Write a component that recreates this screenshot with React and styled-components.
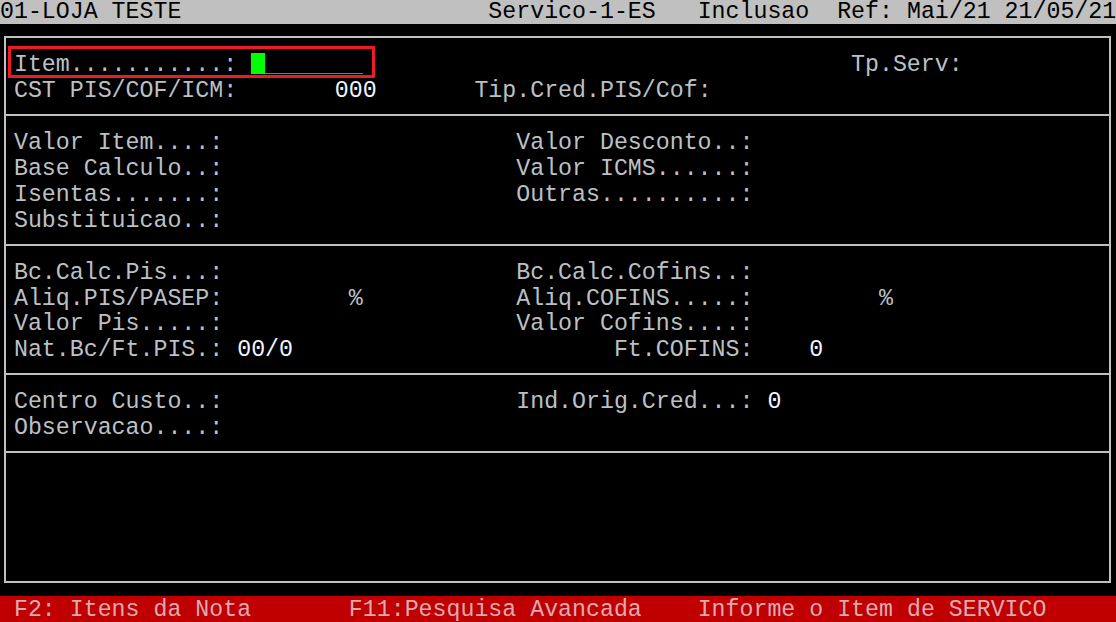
import styled, { createGlobalStyle } from "styled-components";

// terminal grid: 80 x 24 cells
const W = 13.95;
const H = 25.92;

const GlobalStyle = createGlobalStyle`
  html, body {
    margin: 0;
    padding: 0;
    background: #000;
    overflow: hidden;
  }
`;

const Screen = styled.div`
  position: relative;
  width: 1116px;
  height: 622px;
  background: #000;
  display: flex;
  flex-direction: column;
  font-family: "Liberation Mono", "Courier New", monospace;
  font-size: 23.25px;
  line-height: ${H}px;
  color: #bcc0c6;
  overflow: hidden;
`;

const TitleBar = styled.div`
  height: 24px;
  flex-shrink: 0;
  background: #c0c0c0;
  color: #000;
  white-space: pre;
  line-height: 24px;
`;

const Frame = styled.div`
  margin: 12.38px 5px 0 4px;
  border-left: 2px solid #c0c0c0;
  border-right: 2px solid #c0c0c0;
  border-bottom: 2px solid #c0c0c0;
  flex-shrink: 0;
`;

const Section = styled.div`
  border-top: 2px solid #c0c0c0;
  padding: 13.46px 0 10.46px;
  height: ${(p) => p.$rows * H}px;
`;

const Row = styled.div`
  box-sizing: border-box;
  height: ${H}px;
  padding: 1.5px 0 0 ${W - 6}px;
  white-space: pre;
`;

const Value = styled.span`
  color: #f2f5ff;
`;

const Cursor = styled.span`
  display: inline-block;
  width: ${W}px;
  height: 21px;
  margin-top: -0.5px;
  vertical-align: top;
  background: #00ff00;
`;

const Underline = styled.span`
  display: inline-block;
  width: ${(p) => p.$len * W}px;
  height: 20.5px;
  margin-top: -0.5px;
  vertical-align: top;
  border-bottom: 1px solid #e0408f;
`;

const StatusBar = styled.div`
  box-sizing: border-box;
  margin-top: 13.46px;
  padding-top: 2px;
  flex: 1;
  background: #c00000;
  color: #dcaab2;
  white-space: pre;
  line-height: 24px;
`;

const Highlight = styled.div`
  position: absolute;
  left: 8px;
  top: 46px;
  width: 367px;
  height: 32px;
  box-sizing: border-box;
  border: 3px solid #ed1c24;
  pointer-events: none;
`;

const sp = (n) => " ".repeat(Math.max(0, n));

// builds one line of cells: items are { col, text, value, field }
function cells(items, start) {
  const out = [];
  let pos = start;
  items.forEach((it, i) => {
    out.push(sp(it.col - pos));
    if (it.field) {
      out.push(<Cursor key={"c" + i} />);
      out.push(<Underline key={"u" + i} $len={it.field - 1} />);
      pos = it.col + it.field;
    } else {
      out.push(it.value ? <Value key={i}>{it.text}</Value> : <span key={i}>{it.text}</span>);
      pos = it.col + it.text.length;
    }
  });
  return out;
}

const sections = [
  [
    [{ col: 1, text: "Item...........:" }, { col: 18, field: 8 }, { col: 61, text: "Tp.Serv:" }],
    [{ col: 1, text: "CST PIS/COF/ICM:" }, { col: 24, text: "000", value: true }, { col: 34, text: "Tip.Cred.PIS/Cof:" }],
  ],
  [
    [{ col: 1, text: "Valor Item....:" }, { col: 37, text: "Valor Desconto..:" }],
    [{ col: 1, text: "Base Calculo..:" }, { col: 37, text: "Valor ICMS......:" }],
    [{ col: 1, text: "Isentas.......:" }, { col: 37, text: "Outras..........:" }],
    [{ col: 1, text: "Substituicao..:" }],
  ],
  [
    [{ col: 1, text: "Bc.Calc.Pis...:" }, { col: 37, text: "Bc.Calc.Cofins..:" }],
    [{ col: 1, text: "Aliq.PIS/PASEP:" }, { col: 25, text: "%" }, { col: 37, text: "Aliq.COFINS.....:" }, { col: 63, text: "%" }],
    [{ col: 1, text: "Valor Pis.....:" }, { col: 37, text: "Valor Cofins....:" }],
    [{ col: 1, text: "Nat.Bc/Ft.PIS.:" }, { col: 17, text: "00/0", value: true }, { col: 44, text: "Ft.COFINS:" }, { col: 58, text: "0", value: true }],
  ],
  [
    [{ col: 1, text: "Centro Custo..:" }, { col: 37, text: "Ind.Orig.Cred...:" }, { col: 55, text: "0", value: true }],
    [{ col: 1, text: "Observacao....:" }],
  ],
  [[], [], [], []],
];

const title = [
  { col: 0, text: "01-LOJA TESTE" },
  { col: 35, text: "Servico-1-ES" },
  { col: 50, text: "Inclusao" },
  { col: 60, text: "Ref: Mai/21 21/05/21" },
];

const status = [
  { col: 1, text: "F2: Itens da Nota" },
  { col: 25, text: "F11:Pesquisa Avancada" },
  { col: 50, text: "Informe o Item de SERVICO" },
];

export default function App() {
  return (
    <>
      <GlobalStyle />
      <Screen>
        <TitleBar>{cells(title, 0)}</TitleBar>
        <Frame>
          {sections.map((rows, s) => (
            <Section key={s} $rows={rows.length}>
              {rows.map((items, r) => (
                <Row key={r}>{cells(items, 1)}</Row>
              ))}
            </Section>
          ))}
        </Frame>
        <StatusBar>{cells(status, 0)}</StatusBar>
        <Highlight />
      </Screen>
    </>
  );
}
